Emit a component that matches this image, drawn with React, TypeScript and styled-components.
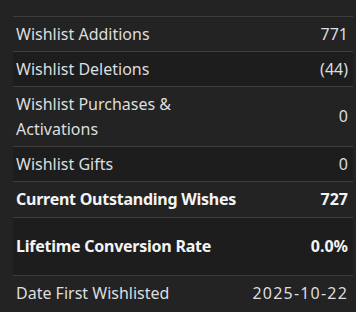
import React from "react";
import styled, { createGlobalStyle } from "styled-components";

const Global = createGlobalStyle`
  html, body {
    margin: 0;
    padding: 0;
    background: #232323;
  }
  body {
    font-family: "Noto Sans", "Open Sans", sans-serif;
  }
`;

const Page = styled.div`
  padding: 16px 3px 0 13px;
`;

const Table = styled.table`
  width: 340px;
  border-collapse: collapse;
  font-size: 16px;
  line-height: 25px;
  color: #dcdedf;
`;

const Row = styled.tr<{ $shade?: boolean }>`
  border-top: 1px solid #3d3d3d;
  background: ${(p) => (p.$shade ? "#1d1d1d" : "transparent")};
`;

const Label = styled.td<{ $bold?: boolean; $pad?: number }>`
  padding: ${(p) => p.$pad ?? 4.5}px 4px ${(p) => p.$pad ?? 4.5}px 3px;
  text-align: left;
  vertical-align: middle;
  font-weight: ${(p) => (p.$bold ? 700 : 400)};
  letter-spacing: ${(p) => (p.$bold ? "-0.25px" : "normal")};
  color: ${(p) => (p.$bold ? "#f4f4f4" : "#dcdedf")};
`;

const Value = styled.td<{ $bold?: boolean; $pad?: number; $wide?: boolean }>`
  padding: ${(p) => p.$pad ?? 4.5}px 5px ${(p) => p.$pad ?? 4.5}px 4px;
  text-align: right;
  vertical-align: middle;
  white-space: nowrap;
  font-weight: ${(p) => (p.$bold ? 700 : 400)};
  letter-spacing: ${(p) => (p.$wide ? "1.2px" : "normal")};
  color: ${(p) => (p.$bold ? "#f4f4f4" : "#dcdedf")};
`;

type Stat = {
  label: string;
  value: string;
  bold?: boolean;
  pad?: number;
  wide?: boolean;
};

const stats: Stat[] = [
  { label: "Wishlist Additions", value: "771" },
  { label: "Wishlist Deletions", value: "(44)" },
  { label: "Wishlist Purchases & Activations", value: "0" },
  { label: "Wishlist Gifts", value: "0" },
  { label: "Current Outstanding Wishes", value: "727", bold: true, pad: 5 },
  { label: "Lifetime Conversion Rate", value: "0.0%", bold: true, pad: 16 },
  { label: "Date First Wishlisted", value: "2025-10-22", wide: true },
];

export default function App() {
  return (
    <>
      <Global />
      <Page>
        <Table>
          <tbody>
            {stats.map((s, i) => (
              <Row key={s.label} $shade={i % 2 === 1}>
                <Label $bold={s.bold} $pad={s.pad}>
                  {s.label}
                </Label>
                <Value $bold={s.bold} $pad={s.pad} $wide={s.wide}>
                  {s.value}
                </Value>
              </Row>
            ))}
          </tbody>
        </Table>
      </Page>
    </>
  );
}
